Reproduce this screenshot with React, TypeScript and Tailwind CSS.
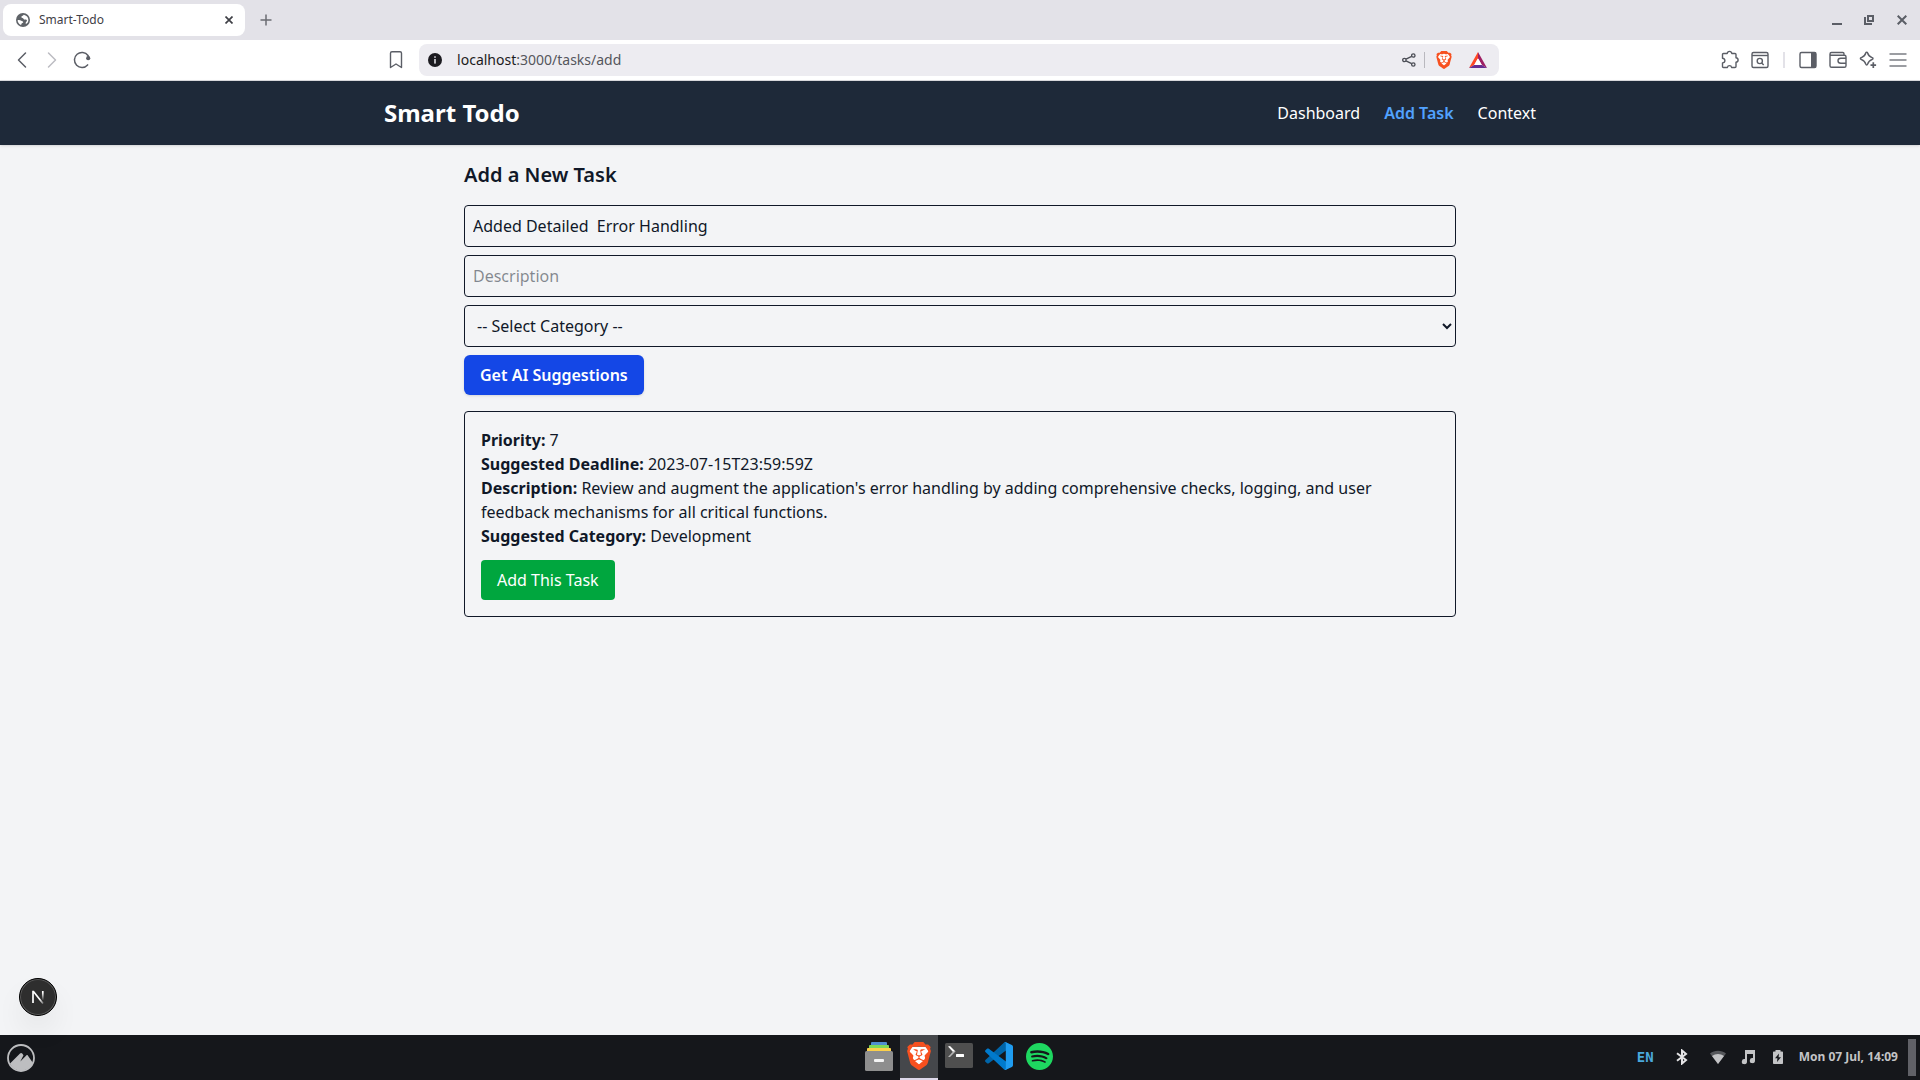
import React, { useState } from "react";
import { SiBrave, SiSpotify } from "react-icons/si";

function GlobeIcon() {
  return (
    <svg width="16" height="16" viewBox="0 0 16 16" aria-hidden="true">
      <circle cx="8" cy="8" r="7" fill="#5f6368" />
      <path
        d="M2.6 8.2c1.2-.2 2.6-.2 3.6.5.8.6 1.700.5 2 1.200.2.7-.7 1-1.300 1.300-.5.3-.4 1-.9 1.700C3.900 12.100 2.700 10.300 2.600 8.200Z"
        fill="#fff"
      />
      <path
        d="M8.800 2.700c-.4.8-1.700 1-2.300 1.700-.5.7.2 1.400 1 1.600 1 .2 1 1.200 1.900 1.500 1 .4 2.100-.2 2.500.8.3.9-.9 1.500-1.200 2.500-.1.500 0 .9.300 1.200 1.500-.9 2.400-2.300 2.400-4.100 0-2.600-2.100-4.700-4.600-5.200Z"
        fill="#fff"
      />
    </svg>
  );
}

function BackIcon() {
  return (
    <svg width="20" height="20" viewBox="0 0 20 20" fill="none" stroke="#5b5e66" strokeWidth="1.500" strokeLinecap="round" strokeLinejoin="round" aria-hidden="true">
      <path d="M13.500 3 6.500 10l7 7" />
    </svg>
  );
}

function ForwardIcon() {
  return (
    <svg width="20" height="20" viewBox="0 0 20 20" fill="none" stroke="#bcbcc2" strokeWidth="1.500" strokeLinecap="round" strokeLinejoin="round" aria-hidden="true">
      <path d="m6.500 3 7 7-7 7" />
    </svg>
  );
}

function ReloadIcon() {
  return (
    <svg width="20" height="20" viewBox="0 0 20 20" fill="none" aria-hidden="true">
      <path d="M16 5.500A7.500 7.500 0 1 0 15.600 14.900" stroke="#5b5e66" strokeWidth="1.500" strokeLinecap="round" />
      <circle cx="16.200" cy="8.200" r="2.100" fill="#5b5e66" />
      <path d="M16 5.500l.8 2" stroke="#5b5e66" strokeWidth="1.500" />
    </svg>
  );
}

function BookmarkIcon() {
  return (
    <svg width="20" height="20" viewBox="0 0 20 20" fill="none" stroke="#5b5e66" strokeWidth="1.400" strokeLinejoin="round" aria-hidden="true">
      <path d="M4.500 17.500V3.200c0-.9.600-1.500 1.500-1.500h8c.9 0 1.500.6 1.500 1.500v14.300L10 14Z" />
    </svg>
  );
}

function InfoIcon() {
  return (
    <svg width="14" height="14" viewBox="0 0 14 14" aria-hidden="true">
      <circle cx="7" cy="7" r="7" fill="#1c1b20" />
      <rect x="6.250" y="3.300" width="1.500" height="1.500" fill="#ecebf0" />
      <rect x="6.250" y="6" width="1.500" height="4.600" fill="#ecebf0" />
    </svg>
  );
}

function ShareIcon() {
  return (
    <svg width="16" height="16" viewBox="0 0 16 16" fill="none" stroke="#4b4d55" strokeWidth="1.300" aria-hidden="true">
      <circle cx="3.400" cy="8" r="1.700" />
      <circle cx="12.300" cy="3.500" r="1.700" />
      <circle cx="12.300" cy="12.500" r="1.700" />
      <path d="M5 7.200 10.700 4.300M5 8.800l5.700 2.900" />
    </svg>
  );
}

function RewardsIcon() {
  return (
    <svg width="18" height="16" viewBox="0 0 18 16" aria-hidden="true">
      <path d="M9 0 0 16l5.200-3.100L9 6.200Z" fill="#ff4724" />
      <path d="M9 0l9 16-5.200-3.100L9 6.200Z" fill="#9e1f63" />
      <path d="M0 16h18l-5.200-3.100H5.200Z" fill="#662d91" />
      <path d="M9 6.200 5.200 12.900h7.600Z" fill="#fff" />
    </svg>
  );
}

function PuzzleIcon() {
  return (
    <svg width="20" height="20" viewBox="0 0 20 20" fill="none" stroke="#5b5e66" strokeWidth="1.400" strokeLinejoin="round" aria-hidden="true">
      <path d="M3.500 3.500h3.700c.2-1.400 1-2.100 2.300-2.100s2.100.7 2.300 2.100h3.200c.6 0 1 .4 1 1v3.300c1.400.2 2.100 1 2.100 2.200s-.7 2.100-2.100 2.300v4.200c0 .6-.4 1-1 1h-3.400c-.2-1.300-.9-1.900-2.100-1.900s-1.900.6-2.100 1.900H3.500c-.6 0-1-.4-1-1v-3.600c1.500-.1 2.400-.9 2.400-2.300S4 8.400 2.500 8.200V4.500c0-.6.4-1 1-1Z" />
    </svg>
  );
}

function SearchTabsIcon() {
  return (
    <svg width="20" height="20" viewBox="0 0 20 20" fill="none" stroke="#5b5e66" strokeWidth="1.400" aria-hidden="true">
      <rect x="2" y="2.500" width="16" height="15" rx="1.500" />
      <path d="M2 5.500h16" />
      <circle cx="9.800" cy="11" r="2.600" />
      <path d="m11.700 12.900 2 2" />
    </svg>
  );
}

function SidebarIcon() {
  return (
    <svg width="20" height="20" viewBox="0 0 20 20" aria-hidden="true">
      <rect x="2" y="2.500" width="16" height="15" rx="1.500" fill="none" stroke="#5b5e66" strokeWidth="1.400" />
      <path d="M13 2.500h4c.6 0 1 .4 1 1v13c0 .6-.4 1-1 1h-4Z" fill="#5b5e66" />
    </svg>
  );
}

function WalletIcon() {
  return (
    <svg width="20" height="20" viewBox="0 0 20 20" fill="none" stroke="#5b5e66" strokeWidth="1.400" strokeLinejoin="round" aria-hidden="true">
      <path d="M16 5.200V3.700c0-.7-.5-1.200-1.200-1.200H3.500c-.9 0-1.500.6-1.500 1.400v11.800c0 .9.700 1.600 1.600 1.600h12.800c.9 0 1.600-.7 1.600-1.600V6.800c0-.9-.7-1.600-1.600-1.600H3.500C2.600 5.200 2 4.700 2 3.900" />
      <path d="M18 8.300h-5.200c-1.600 0-2.800 1-2.800 2.500s1.200 2.500 2.800 2.500H18" />
    </svg>
  );
}

function SparkleIcon() {
  return (
    <svg width="20" height="20" viewBox="0 0 20 20" fill="none" stroke="#5b5e66" strokeLinejoin="round" aria-hidden="true">
      <path d="M8.700 2.200c.4 0 .7.200.8.600.9 3 1.900 4 4.900 5 .4.100.6.400.6.800s-.2.700-.6.800c-3 1-4 2-4.900 5-.1.400-.4.600-.8.600s-.7-.2-.8-.6c-.9-3-1.900-4-4.900-5-.4-.1-.6-.4-.6-.8s.2-.7.6-.8c3-1 4-2 4.900-5 .1-.4.4-.6.8-.6Z" strokeWidth="1.400" />
      <path d="M15.300 12.300v5.600M12.500 15.100h5.600" strokeWidth="1.700" />
    </svg>
  );
}

function MenuIcon() {
  return (
    <svg width="20" height="20" viewBox="0 0 20 20" fill="none" stroke="#7b7d84" strokeWidth="1.600" aria-hidden="true">
      <path d="M1.500 4h17M1.500 10h17M1.500 16h17" />
    </svg>
  );
}

function BraveIcon({ size }: { size: number }) {
  return (
    <span className="grid place-items-center">
      <svg className="col-start-1 row-start-1" width={size} height={size} viewBox="0 0 24 24" aria-hidden="true">
        <path d="M6 4h12l2.500 4-2 8L12 21.500 5.500 16l-2-8Z" fill="#fff" />
      </svg>
      <SiBrave className="col-start-1 row-start-1 text-[#f7501f]" size={size} aria-hidden="true" />
    </span>
  );
}

function FilesIcon() {
  return (
    <svg width="30" height="30" viewBox="0 0 30 30" aria-hidden="true">
      <rect x="7" y="1" width="16" height="4" rx="1" fill="#4f8fd0" />
      <rect x="5" y="4" width="20" height="4" rx="1" fill="#7ed957" />
      <rect x="3" y="7" width="24" height="5" rx="1" fill="#fcd04b" />
      <rect x="1" y="10" width="28" height="20" rx="1.500" fill="#8e8e8e" />
      <rect x="10" y="18" width="10" height="3" rx="1" fill="#f4f4f4" />
    </svg>
  );
}

function TerminalIcon() {
  return (
    <svg width="28" height="26" viewBox="0 0 28 26" aria-hidden="true">
      <rect width="28" height="25" rx="1.500" fill="#4f4f4f" />
      <path d="M3 3.500 5 3l5.500 5.500L8 9Z" fill="#fff" />
      <path d="M10.500 8.500 5 14H3l5-5.500Z" fill="#b5b5b5" />
      <rect x="11" y="11" width="8" height="3" rx=".5" fill="#fff" />
    </svg>
  );
}

function CodeIcon() {
  return (
    <svg width="28" height="28" viewBox="0 0 28 28" aria-hidden="true">
      <path d="M27 4.200 20.900.3c-.6-.4-1.300-.3-1.800.2L.4 18.100c-.5.5-.5 1.200 0 1.700l1.600 1.500c.4.400 1 .4 1.500.1L26 4.700c.6-.4 1.700 0 1.700.9Z" fill="#0065a9" />
      <path d="M27 23.800l-6.100 3.900c-.6.4-1.300.3-1.800-.2L.4 9.900c-.5-.5-.5-1.200 0-1.700L2 6.700c.4-.4 1-.4 1.500-.1L26 23.300c.6.400 1.700 0 1.700-.9Z" fill="#007acc" />
      <path d="M20.900 27.700c-.6.400-1.400.2-1.900-.3.700.6 1.800.1 1.800-.8V1.400c0-.9-1.100-1.400-1.800-.8.500-.5 1.300-.7 1.900-.4l6 2.900c.7.300 1.100.9 1.100 1.600v18.600c0 .7-.4 1.300-1.100 1.600Z" fill="#1f9cf0" />
    </svg>
  );
}

function CinnamonIcon() {
  return (
    <svg width="28" height="28" viewBox="0 0 28 28" aria-hidden="true">
      <circle cx="14" cy="14" r="13" fill="none" stroke="#bdbec0" strokeWidth="1.800" />
      <path d="M3 19.500 13 9.500c.8-.8 1.600-.8 2.200 0l1.300 1.700-3.200 6.200 6-6c.5-.5 1-.5 1.500 0l5.200 7.500C23.800 23.500 19.500 26.500 14 26.500S4.700 23.500 3 19.500Z" fill="#bdbec0" />
    </svg>
  );
}

function BluetoothIcon() {
  return (
    <svg width="16" height="16" viewBox="0 0 16 16" fill="none" stroke="#e4e4e6" strokeWidth="2" aria-hidden="true">
      <path d="M3 4.300 12 11l-4 3.500v-13L12 5l-9 6.700" />
    </svg>
  );
}

function WifiIcon() {
  return (
    <svg width="16" height="16" viewBox="0 0 16 16" aria-hidden="true">
      <path d="M0 4.500C4.500.8 11.500.8 16 4.500L8 15Z" fill="#56585c" />
      <path d="M2 7c3.500-2.700 8.500-2.700 12 0l-6 8Z" fill="#c3c4c6" />
    </svg>
  );
}

function MusicIcon() {
  return (
    <svg width="16" height="16" viewBox="0 0 16 16" fill="#c3c4c6" aria-hidden="true">
      <path d="M5 1h10v10.500a2.600 2.600 0 1 1-2-2.500V5H7v7.500A2.600 2.600 0 1 1 5 10Z" />
    </svg>
  );
}

function BatteryIcon() {
  return (
    <svg width="16" height="16" viewBox="0 0 16 16" aria-hidden="true">
      <path d="M5.500 1h5v1.500h1.700c.5 0 .8.300.8.800v11c0 .4-.3.700-.8.700H3.800c-.5 0-.8-.3-.8-.7v-11c0-.5.3-.8.800-.8h1.700Z" fill="#c3c4c6" />
      <path d="M9 4.500 5 9.300h2.400L7 13l4-4.800H8.600Z" fill="#16181c" />
    </svg>
  );
}

function IconButton({ label, children }: { label: string; children: React.ReactNode }) {
  return (
    <button type="button" aria-label={label} className="flex h-8 w-[30px] shrink-0 items-center justify-center">
      {children}
    </button>
  );
}

function TabStrip() {
  return (
    <div className="flex h-10 items-center bg-[#e3e2e8] pl-[3px]">
      <div className="flex h-8 w-[242px] items-center rounded-lg bg-white pr-2 pl-3">
        <GlobeIcon />
        <span className="ml-2 grow text-xs text-[#3f4046]">Smart-Todo</span>
        <button type="button" aria-label="Close tab" className="flex size-4 items-center justify-center">
          <svg width="8" height="8" viewBox="0 0 8 8" stroke="#3f4046" strokeWidth="1.700" aria-hidden="true">
            <path d="m.5.5 7 7M7.500.5l-7 7" />
          </svg>
        </button>
      </div>
      <button type="button" aria-label="New tab" className="ml-3 flex size-[18px] items-center justify-center">
        <svg width="12" height="12" viewBox="0 0 12 12" stroke="#6b6c72" strokeWidth="1.500" aria-hidden="true">
          <path d="M6 .5v11M.5 6h11" />
        </svg>
      </button>
      <div className="ml-auto flex items-center gap-4 pr-2.5">
        <button type="button" aria-label="Minimize" className="flex size-4 items-center justify-center">
          <svg width="12" height="12" viewBox="0 0 12 12" aria-hidden="true">
            <rect x="0" y="9" width="10" height="2" fill="#5b5e66" />
          </svg>
        </button>
        <button type="button" aria-label="Restore" className="flex size-4 items-center justify-center">
          <svg width="12" height="12" viewBox="0 0 12 12" fill="none" stroke="#5b5e66" strokeWidth="2" aria-hidden="true">
            <rect x="4" y="2" width="5" height="5" />
            <path d="M1 3v7h7" />
          </svg>
        </button>
        <button type="button" aria-label="Close window" className="flex size-4 items-center justify-center">
          <svg width="10" height="10" viewBox="0 0 10 10" stroke="#5b5e66" strokeWidth="2" aria-hidden="true">
            <path d="m.7.7 8.600 8.600M9.300.7.7 9.300" />
          </svg>
        </button>
      </div>
    </div>
  );
}

function Toolbar() {
  return (
    <div className="flex h-[41px] items-center border-b border-[#dcdce0] bg-white px-[7px]">
      <IconButton label="Back"><BackIcon /></IconButton>
      <IconButton label="Forward"><ForwardIcon /></IconButton>
      <IconButton label="Reload"><ReloadIcon /></IconButton>
      <div className="flex-[25]" />
      <IconButton label="Bookmark this tab"><BookmarkIcon /></IconButton>
      <div className="ml-2 flex h-8 w-[1080px] items-center rounded-lg bg-[#edecf1] pr-1.5 pl-[9px]">
        <InfoIcon />
        <p className="ml-[15px] grow text-sm text-[#55565c]">
          <span className="text-[#1c1b20]">localhost</span>:3000/tasks/add
        </p>
        <IconButton label="Share"><ShareIcon /></IconButton>
        <span className="h-4 w-px bg-[#b9b8be]" />
        <button type="button" aria-label="Brave Shields" className="flex h-8 w-[38px] items-center justify-center">
          <BraveIcon size={18} />
        </button>
        <button type="button" aria-label="Brave Rewards" className="flex h-8 w-[30px] items-center justify-center">
          <RewardsIcon />
        </button>
      </div>
      <div className="flex-[19]" />
      <IconButton label="Extensions"><PuzzleIcon /></IconButton>
      <IconButton label="Search tabs"><SearchTabsIcon /></IconButton>
      <span className="mx-2 h-4 w-0.5 bg-[#e3e2e8]" />
      <IconButton label="Sidebar"><SidebarIcon /></IconButton>
      <IconButton label="Wallet"><WalletIcon /></IconButton>
      <IconButton label="Leo AI"><SparkleIcon /></IconButton>
      <IconButton label="Menu"><MenuIcon /></IconButton>
    </div>
  );
}

function SiteNav() {
  return (
    <nav className="bg-gray-800 text-white shadow-sm">
      <div className="mx-auto flex h-16 max-w-6xl items-center justify-between">
        <h1 className="text-2xl font-bold">Smart Todo</h1>
        <div className="flex gap-6">
          <a href="#dashboard">Dashboard</a>
          <a href="#add" className="font-semibold text-blue-400">Add Task</a>
          <a href="#context">Context</a>
        </div>
      </div>
    </nav>
  );
}

function AddTask() {
  const [title, setTitle] = useState("Added Detailed  Error Handling");
  const [description, setDescription] = useState("");
  return (
    <main className="mx-auto w-full max-w-5xl p-4">
      <h2 className="mb-4 text-xl font-semibold">Add a New Task</h2>
      <form className="flex flex-col items-start gap-2" onSubmit={(e) => e.preventDefault()}>
        <input
          type="text"
          aria-label="Title"
          className="w-full rounded border p-2"
          value={title}
          onChange={(e) => setTitle(e.target.value)}
        />
        <input
          type="text"
          aria-label="Description"
          placeholder="Description"
          className="w-full rounded border p-2"
          value={description}
          onChange={(e) => setDescription(e.target.value)}
        />
        <select aria-label="Category" className="w-full rounded border p-2">
          <option>-- Select Category --</option>
          <option>Development</option>
        </select>
        <button type="submit" className="rounded-md bg-blue-700 px-4 py-2 font-semibold text-white shadow">
          Get AI Suggestions
        </button>
      </form>
      <section className="mt-4 rounded border p-4">
        <p><strong>Priority:</strong> 7</p>
        <p><strong>Suggested Deadline:</strong> 2023-07-15T23:59:59Z</p>
        <p>
          <strong>Description:</strong> Review and augment the application's error handling by adding
          comprehensive checks, logging, and user feedback mechanisms for all critical functions.
        </p>
        <p><strong>Suggested Category:</strong> Development</p>
        <button type="button" className="mt-3 rounded bg-green-600 px-4 py-2 text-white">
          Add This Task
        </button>
      </section>
    </main>
  );
}

function DevBadge() {
  return (
    <button
      type="button"
      aria-label="Open Next.js Dev Tools"
      className="absolute bottom-[19px] left-[19px] flex size-[38px] items-center justify-center rounded-full border border-black bg-[#2e2e2e] shadow-[inset_0_0_0_1px_#5a5a5a,0_16px_32px_-8px_rgba(0,0,0,0.16)]"
    >
      <svg width="14" height="14" viewBox="0 0 14 14" fill="none" strokeWidth="1.700" aria-hidden="true">
        <defs>
          <linearGradient id="stem" x1="0" y1="0" x2="0" y2="14" gradientUnits="userSpaceOnUse">
            <stop offset=".2" stopColor="#fff" />
            <stop offset=".75" stopColor="#fff" stopOpacity="0" />
          </linearGradient>
          <linearGradient id="diagonal" x1="6" y1="6" x2="13" y2="14" gradientUnits="userSpaceOnUse">
            <stop offset=".4" stopColor="#fff" />
            <stop offset="1" stopColor="#fff" stopOpacity=".2" />
          </linearGradient>
        </defs>
        <path d="M2 13V1.500h.5L12 13.500" stroke="url(#diagonal)" />
        <path d="M11.800 1v10" stroke="url(#stem)" />
      </svg>
    </button>
  );
}

function Launcher({ label, active, children }: { label: string; active?: boolean; children: React.ReactNode }) {
  return (
    <button
      type="button"
      aria-label={label}
      className={
        active
          ? "flex h-full w-[38px] items-center justify-center border-b-2 border-[#ddd8ea] bg-[#45474b] pb-px"
          : "flex h-full w-[38px] items-center justify-center border-b-2 border-transparent pb-px"
      }
    >
      {children}
    </button>
  );
}

function Taskbar() {
  return (
    <footer className="grid h-[45px] grid-cols-[1fr_auto_1fr] items-center bg-[#15171b]">
      <button type="button" aria-label="Applications" className="ml-[7px] flex size-7 items-center justify-center">
        <CinnamonIcon />
      </button>
      <div className="flex h-[45px] gap-0.5 pr-0.5">
        <Launcher label="Files"><FilesIcon /></Launcher>
        <Launcher label="Brave" active><BraveIcon size={28} /></Launcher>
        <Launcher label="Terminal"><TerminalIcon /></Launcher>
        <Launcher label="Visual Studio Code"><CodeIcon /></Launcher>
        <Launcher label="Spotify"><SiSpotify size={27} className="text-[#1ed760]" aria-hidden="true" /></Launcher>
      </div>
      <div className="flex items-center justify-end pr-1 pb-px">
        <span className="mr-5 font-['DejaVu_Sans_Mono',monospace] text-sm font-bold text-[#4aa8dc]">EN</span>
        <span className="mr-5"><BluetoothIcon /></span>
        <span className="mr-3.5"><WifiIcon /></span>
        <span className="mr-3.5"><MusicIcon /></span>
        <span className="mr-[13px]"><BatteryIcon /></span>
        <time className="text-xs font-bold text-[#c3c4c6]">Mon 07 Jul, 14:09</time>
        <span className="ml-2.5 h-[37px] w-2 bg-[#606167]" />
      </div>
    </footer>
  );
}

export default function App() {
  return (
    <div className="flex min-h-screen flex-col bg-gray-100 font-['Noto_Sans',sans-serif] text-gray-900">
      <header>
        <TabStrip />
        <Toolbar />
      </header>
      <div className="relative grow">
        <SiteNav />
        <AddTask />
        <DevBadge />
      </div>
      <Taskbar />
    </div>
  );
}
